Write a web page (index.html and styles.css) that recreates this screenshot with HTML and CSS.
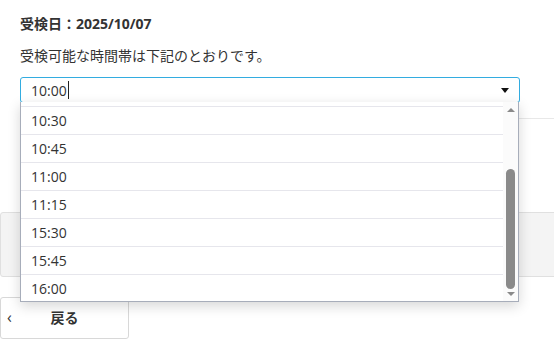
FILE: index.html
```html
<!DOCTYPE html>
<html lang="ja">
<head>
    <meta charset="UTF-8">
    <meta name="viewport" content="width=device-width, initial-scale=1.0">
    <title>受検時間の選択</title>
    <link rel="stylesheet" href="styles.css">
</head>
<body>
    <div class="content">
        <div class="exam-date">受検日：2025/10/07</div>
        <p class="lead">受検可能な時間帯は下記のとおりです。</p>

        <div class="timeselect">
            <div class="timeinput">
                <span class="value">10:00</span><span class="caret"></span>
                <span class="arrow"></span>
            </div>
            <div class="dropdown">
                <ul class="options">
                    <li>10:30</li>
                    <li>10:45</li>
                    <li>11:00</li>
                    <li>11:15</li>
                    <li>15:30</li>
                    <li>15:45</li>
                    <li>16:00</li>
                </ul>
                <div class="scrollbar">
                    <span class="sb-up"></span>
                    <span class="sb-track"><span class="sb-thumb"></span></span>
                    <span class="sb-down"></span>
                </div>
            </div>
        </div>
        <div class="divider"></div>
    </div>

    <div class="panel"></div>

    <a href="#" class="backbutton"><span class="chev">&lsaquo;</span>戻る</a>
</body>
</html>
```

FILE: styles.css
```css
body {
    margin: 0;
    font-family: "Open Sans", "Noto Sans CJK JP", sans-serif;
    color: #333;
    background: #fff;
    overflow: hidden;
}

.content {
    padding: 14px 0 0 20px;
}

.exam-date {
    font-size: 14px;
    font-weight: bold;
    line-height: 20px;
}

.lead {
    font-size: 14px;
    line-height: 20px;
    margin: 12px 0 11px;
}

.timeselect {
    position: relative;
    width: 500px;
}

.timeinput {
    box-sizing: border-box;
    height: 26px;
    border: 1px solid #33ace0;
    border-radius: 3px;
    padding-left: 10px;
    display: flex;
    align-items: center;
    font-size: 14px;
}

.caret {
    width: 1px;
    height: 18px;
    background: #222;
    margin-left: 1px;
}

.arrow {
    margin-left: auto;
    margin-right: 10px;
    width: 0;
    height: 0;
    border-left: 4px solid transparent;
    border-right: 4px solid transparent;
    border-top: 5px solid #111;
}

.dropdown {
    position: absolute;
    top: 25px;
    left: 0;
    width: 499px;
    height: 200px;
    box-sizing: border-box;
    background: #fff;
    border: 1px solid #a7adba;
    border-top: 0;
    box-shadow: 0 4px 12px rgba(0, 0, 0, 0.16);
    display: flex;
    overflow: hidden;
    z-index: 5;
}

.options {
    list-style: none;
    margin: 0;
    padding: 4px 0 0;
    flex: 1;
}

.options li {
    box-sizing: border-box;
    height: 28px;
    border-top: 1px solid #e6e6ec;
    padding-left: 10px;
    font-size: 14px;
    line-height: 28px;
}

.scrollbar {
    width: 15px;
    background: #fbfbfb;
    display: flex;
    flex-direction: column;
    align-items: center;
}

.sb-up, .sb-down {
    width: 0;
    height: 0;
    border-left: 4px solid transparent;
    border-right: 4px solid transparent;
}

.sb-up {
    margin-top: 6px;
    border-bottom: 4px solid #8a8a8a;
}

.sb-down {
    margin: 3px 0 5px;
    border-top: 4px solid #8a8a8a;
}

.sb-track {
    flex: 1;
    display: flex;
    flex-direction: column;
    justify-content: flex-end;
    padding-top: 4px;
}

.sb-thumb {
    width: 9px;
    height: 120px;
    background: #8a8a8a;
    border-radius: 5px;
}

.divider {
    border-top: 1px solid #e8e8e8;
    margin-top: 15px;
}

.panel {
    margin-top: 93px;
    height: 63px;
    background: #f4f4f4;
    border: 1px solid #e0e0e0;
    border-radius: 3px;
    margin-right: -4px;
}

.backbutton {
    margin-top: 20px;
    box-sizing: border-box;
    width: 129px;
    height: 42px;
    border: 1px solid #d8d8d8;
    border-radius: 3px;
    background: #fff;
    display: flex;
    align-items: center;
    justify-content: center;
    position: relative;
    color: #333;
    font-weight: bold;
    font-size: 14px;
    line-height: 20px;
    text-decoration: none;
}

.chev {
    position: absolute;
    left: 6px;
    top: 9px;
    font-size: 16px;
    font-weight: normal;
}
```
